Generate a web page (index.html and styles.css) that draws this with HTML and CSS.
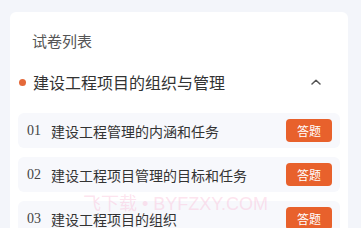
FILE: index.html
```html
<!DOCTYPE html>
<html lang="zh-CN">
<head>
<meta charset="utf-8">
<title>试卷列表</title>
<link rel="stylesheet" href="styles.css">
</head>
<body>
<div class="card">
  <div class="title">试卷列表</div>
  <div class="section">
    <span class="dot"></span>
    <span class="section-name">建设工程项目的组织与管理</span>
    <svg class="chevron" width="10" height="6" viewBox="0 0 10 6"><path d="M1 5 L5 1.2 L9 5" fill="none" stroke="#555" stroke-width="1.5" stroke-linecap="round" stroke-linejoin="round"/></svg>
  </div>
  <div class="list">
    <div class="row">
      <span class="num">01</span>
      <span class="name">建设工程管理的内涵和任务</span>
      <span class="btn">答题</span>
    </div>
    <div class="row">
      <span class="num">02</span>
      <span class="name">建设工程项目管理的目标和任务</span>
      <span class="btn">答题</span>
    </div>
    <div class="row">
      <span class="num">03</span>
      <span class="name">建设工程项目的组织</span>
      <span class="btn">答题</span>
    </div>
  </div>
</div>
<div class="watermark">飞下载 • BYFZXY.COM</div>
</body>
</html>
```

FILE: styles.css
```css
html, body {
  margin: 0;
  padding: 0;
}
body {
  background: #f3f5fa;
  font-family: "Noto Sans CJK SC", "Noto Sans", sans-serif;
  width: 361px;
  height: 228px;
  overflow: hidden;
  position: relative;
}
.card {
  margin: 12px 13px 0 10px;
  background: #ffffff;
  padding: 19px 8px 0 8px;
  border-radius: 6px 6px 0 0;
  height: 216px;
  box-sizing: border-box;
  overflow: hidden;
}
.title {
  padding-left: 14px;
  font-size: 15px;
  line-height: 20px;
  color: #555555;
}
.section {
  margin-top: 19px;
  height: 24px;
  display: flex;
  align-items: center;
}
.dot {
  width: 7px;
  height: 7px;
  border-radius: 50%;
  background: #e4693a;
  margin-left: 1px;
  margin-right: 7px;
}
.section-name {
  font-size: 16px;
  line-height: 24px;
  color: #333333;
  flex: 1;
}
.chevron {
  margin-right: 19px;
}
.list {
  margin-top: 19px;
  display: flex;
  flex-direction: column;
  gap: 9px;
}
.row {
  height: 35px;
  flex-shrink: 0;
  background: #f7f8fc;
  border-radius: 6px;
  display: flex;
  align-items: center;
  padding: 0 8px 0 9px;
}
.num {
  width: 24px;
  font-family: "Liberation Serif", serif;
  font-size: 14px;
  line-height: 14px;
  color: #444444;
}
.name {
  flex: 1;
  font-size: 14px;
  line-height: 14px;
  color: #333333;
}
.btn {
  width: 46px;
  height: 23px;
  border-radius: 4px;
  background: #e8612c;
  color: #ffffff;
  font-size: 12px;
  line-height: 23px;
  text-align: center;
}
.watermark {
  position: absolute;
  left: 83px;
  top: 198px;
  font-family: "Liberation Sans", "Noto Sans CJK SC", sans-serif;
  font-size: 18px;
  line-height: 13px;
  color: rgba(250, 185, 212, 0.4);
  pointer-events: none;
  white-space: nowrap;
}
```
